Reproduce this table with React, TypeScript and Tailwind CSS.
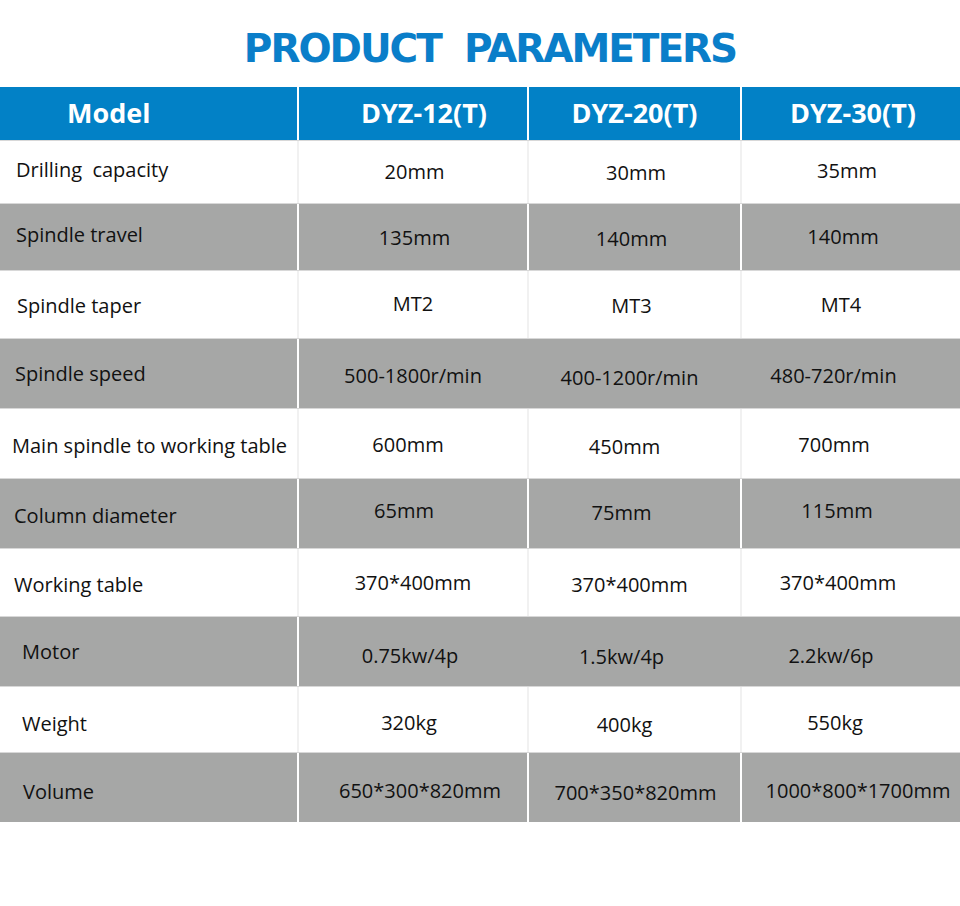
import React from "react";

type Row = {
  label: string;
  values: string[];
  gray: boolean;
  h: string;
  cls: string[];
  merged?: boolean;
};

const rows: Row[] = [
  { label: "Drilling\u00a0 capacity", values: ["20mm", "30mm", "35mm"], gray: false, h: "h-[63px]", cls: ["pl-[16px] -translate-y-[2px]", "pl-[3px]", "translate-y-[1px] pl-[3px]", "-translate-y-[1px] -ml-[8px]"] },
  { label: "Spindle travel", values: ["135mm", "140mm", "140mm"], gray: true, h: "h-[67px]", cls: ["pl-[16px] -translate-y-[2px]", "pl-[3px] translate-y-[1px]", "translate-y-[2px] -ml-[6px]", "-ml-[16px]"] },
  { label: "Spindle taper", values: ["MT2", "MT3", "MT4"], gray: false, h: "h-[68px]", cls: ["pl-[17px] translate-y-[1px]", "-translate-y-[1px]", "translate-y-[1px] -ml-[6px]", "-ml-[20px]"] },
  { label: "Spindle speed", values: ["500-1800r/min", "400-1200r/min", "480-720r/min"], gray: true, h: "h-[70px]", cls: ["pl-[15px]", "translate-y-[2px]", "translate-y-[4px] -ml-[10px]", "translate-y-[2px] -ml-[35px]"], merged: true },
  { label: "Main spindle to working table", values: ["600mm", "450mm", "700mm"], gray: false, h: "h-[70px]", cls: ["pl-[12px] translate-y-[2px]", "-ml-[10px] translate-y-[1px]", "-ml-[20px] translate-y-[3px]", "-ml-[34px] translate-y-[1px]"] },
  { label: "Column diameter", values: ["65mm", "75mm", "115mm"], gray: true, h: "h-[70px]", cls: ["pl-[14px] translate-y-[2px]", "-ml-[18px] -translate-y-[3px]", "-ml-[26px] -translate-y-[1px]", "-ml-[28px] -translate-y-[3px]"] },
  { label: "Working table", values: ["370*400mm", "370*400mm", "370*400mm"], gray: false, h: "h-[68px]", cls: ["pl-[14px] translate-y-[2px]", "", "-ml-[10px] translate-y-[2px]", "-ml-[26px]"] },
  { label: "Motor", values: ["0.75kw/4p", "1.5kw/4p", "2.2kw/6p"], gray: true, h: "h-[70px]", cls: ["pl-[22px]", "-ml-[6px] translate-y-[4px]", "-ml-[26px] translate-y-[5px]", "-ml-[40px] translate-y-[4px]"], merged: true },
  { label: "Weight", values: ["320kg", "400kg", "550kg"], gray: false, h: "h-[66px]", cls: ["pl-[22px] translate-y-[4px]", "-ml-[8px] translate-y-[3px]", "-ml-[20px] translate-y-[5px]", "-ml-[32px] translate-y-[3px]"] },
  { label: "Volume", values: ["650*300*820mm", "700*350*820mm", "1000*800*1700mm"], gray: true, h: "h-[70px]", cls: ["pl-[23px] translate-y-[4px]", "pl-[14px] translate-y-[3px]", "pl-[2px] translate-y-[5px]", "pl-[14px] translate-y-[3px]"] },
];

export default function App() {
  return (
    <div
      className="w-[960px] h-[906px] bg-white text-[#111111]"
      style={{ fontFamily: '"Open Sans", "Noto Sans", sans-serif' }}
    >
      <div className="h-[87px] flex items-center justify-center pt-[10px] pl-[20px]">
        <h1
          className="text-[39px] leading-none font-bold tracking-[-2px] text-[#0a7ec9]"
          style={{ fontFamily: '"DejaVu Sans", sans-serif' }}
        >
          PRODUCT&nbsp; PARAMETERS
        </h1>
      </div>

      <div className="flex h-[53px] bg-[#0281c6] text-white font-bold text-[27px]">
        <div className="w-[297px] flex items-center pl-[67px]">Model</div>
        <div className="w-[230px] border-l-2 border-white flex items-center justify-center pl-[22px]">DYZ-12(T)</div>
        <div className="w-[213px] border-l-2 border-white flex items-center justify-center">DYZ-20(T)</div>
        <div className="flex-1 border-l-2 border-white flex items-center justify-center pl-[4px]">DYZ-30(T)</div>
      </div>

      {rows.map((r) => {
        const bg = r.gray ? "bg-[#a6a7a6]" : "bg-white";
        const b1 = r.gray ? "border-white" : "border-[#f1f1f1]";
        const b2 = r.merged ? "border-transparent" : r.gray ? "border-white" : "border-[#f1f1f1]";
        return (
          <div
            key={r.label}
            className={`flex ${r.h} ${bg} text-[20px] border-t border-[#d8d8d8]`}
          >
            <div className="w-[297px] flex items-center">
              <span className={r.cls[0]}>{r.label}</span>
            </div>
            <div className={`w-[230px] border-l-2 ${b1} flex items-center justify-center`}>
              <span className={r.cls[1]}>{r.values[0]}</span>
            </div>
            <div className={`w-[213px] border-l-2 ${b2} flex items-center justify-center`}>
              <span className={r.cls[2]}>{r.values[1]}</span>
            </div>
            <div className={`flex-1 border-l-2 ${b2} flex items-center justify-center`}>
              <span className={r.cls[3]}>{r.values[2]}</span>
            </div>
          </div>
        );
      })}
    </div>
  );
}
